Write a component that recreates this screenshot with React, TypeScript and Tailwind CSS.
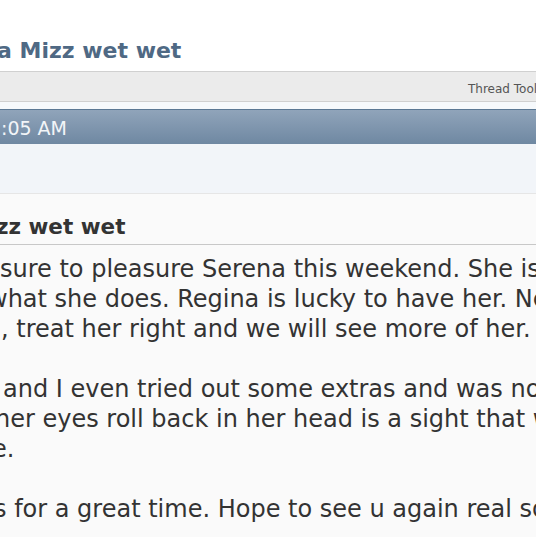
import React from "react";

const lines: { text: string; ml: string }[] = [
  { text: "sure to pleasure Serena this weekend. She is amazing", ml: "ml-[0px]" },
  { text: "what she does. Regina is lucky to have her. Never", ml: "-ml-[12px]" },
  { text: ", treat her right and we will see more of her.", ml: "ml-[1px]" },
  { text: "\u00a0", ml: "ml-0" },
  { text: "and I even tried out some extras and was not", ml: "ml-[3px]" },
  { text: "her eyes roll back in her head is a sight that will", ml: "-ml-[5px]" },
  { text: "e.", ml: "-ml-[8px]" },
  { text: "\u00a0", ml: "ml-0" },
  { text: "s for a great time. Hope to see u again real soon", ml: "-ml-[6px]" },
];

export default function App() {
  return (
    <div className="w-[536px] h-[537px] overflow-hidden bg-white font-['DejaVu_Sans','Verdana',sans-serif]">
      <div className="h-[71px] pt-[38px] whitespace-nowrap">
        <div className="-ml-[3px] text-[22px] leading-[26px] font-bold text-[#4f6984]">
          a Mizz wet wet
        </div>
      </div>
      <div className="h-[31px] border-y border-[#d0d0d0] bg-[#ebebeb] pl-[468px] pt-[4px] whitespace-nowrap">
        <span className="text-[12px] leading-[14px] text-[#555555]">Thread Tools</span>
      </div>
      <div className="h-[7px] bg-[#f6f9fc]" />
      <div className="h-[35px] border-t border-[#5b7894] bg-gradient-to-b from-[#90a4ba] to-[#6f88a2] pt-[7px] pl-[1px] whitespace-nowrap">
        <span className="text-[19px] leading-[22px] text-[#f2f5f8]">:05 AM</span>
      </div>
      <div className="h-[49px] bg-[#f2f5f9]" />
      <div className="border-t border-[#e6e6e6] bg-[#fafafa] h-[400px]">
        <div className="pt-[21px] pb-[5px] border-b border-[#c8c8c8] whitespace-nowrap">
          <div className="-ml-[4px] text-[21.5px] leading-[24px] font-bold text-[#333333]">zz wet wet</div>
        </div>
        <div className="mt-[9px] text-[24px] leading-[30px] text-[#333333] whitespace-nowrap">
          {lines.map((l, i) => (
            <div key={i} className={l.ml}>
              {l.text}
            </div>
          ))}
        </div>
      </div>
    </div>
  );
}
